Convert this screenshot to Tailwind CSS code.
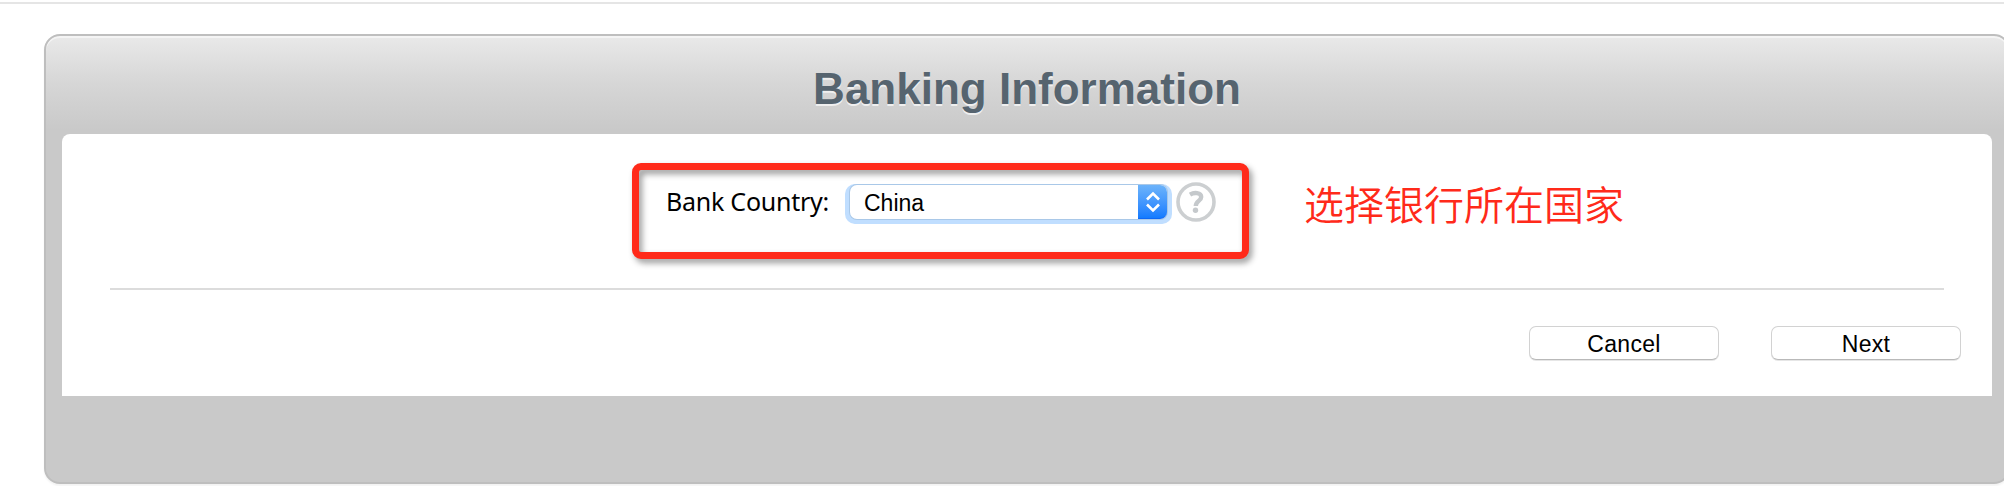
<!DOCTYPE html>
<html lang="en">
<head>
<meta charset="utf-8">
<title>Banking Information</title>
<script src="https://cdn.jsdelivr.net/npm/@tailwindcss/browser@4"></script>
</head>
<body class="h-[486px] w-full overflow-hidden bg-white pt-[2px] font-['Liberation_Sans',sans-serif] text-black">
  <div class="h-[2px] bg-[#e5e5e5]"></div>
  <main class="mt-[30px] ml-[44px] h-[450px] w-[1966px] rounded-[16px] border-2 border-[#bebebe] bg-[#c9c9c9] bg-linear-to-b from-[#e9e9e9] from-0% via-[#d6d6d6] via-[48px] to-[#c9c9c9] to-[94px] px-4 shadow-[inset_0_2px_0_#f4f4f4,0_2px_2px_rgba(0,0,0,0.05)]">
    <h1 class="h-[98px] pt-[28px] text-center text-[44px] leading-[50px] font-bold text-[#56646f] [text-shadow:0_2px_0_#efefef]">Banking Information</h1>
    <section class="flex h-[262px] flex-col rounded-t-[8px] bg-white">
      <div class="relative flex h-[154px] items-start pt-[48px] pl-[604px]">
        <label class="w-[184px] pt-[2px] font-['Noto_Sans',sans-serif] text-[25px] leading-[34px] tracking-[-0.25px] whitespace-nowrap">Bank Country:</label>
        <div class="mt-[3px] flex h-[34px] w-[317px] rounded-[7px] bg-white shadow-[0_0_0_1px_#a9c8e8,0_2px_0_3px_#c0deff,-2px_2px_0_3px_#c0deff,2px_2px_0_3px_#c0deff]">
          <span class="flex-1 pl-[14px] text-[23px] leading-[36px]">China</span>
          <span class="flex w-[29px] items-center justify-center rounded-r-[7px] border-b border-[#0f68f5] bg-linear-to-b from-[#6cb3fa] to-[#127bff]">
            <svg width="16" height="22" viewBox="0 0 16 22" fill="none" stroke="#fff" stroke-width="2.6"><path d="M2 8.5 8 2.5l6 6M2 13.5l6 6 6-6"/></svg>
          </span>
        </div>
        <svg class="ml-[9px]" width="40" height="40" viewBox="0 0 40 40" fill="none"><circle cx="20" cy="20" r="18" stroke="#cccfd1" stroke-width="3.6"/><path d="M14 12.6c4-2.4 11.2-2.2 11.2 2.3 0 4.1-5.4 4-5.4 9" stroke="#c5c9cc" stroke-width="4.4"/><circle cx="19.5" cy="28.2" r="2.7" fill="#c5c9cc"/></svg>
        <p class="ml-[88px] pt-[1px] font-['Noto_Sans_CJK_SC',sans-serif] text-[40px] leading-[40px] font-[350] text-[#ff2a1a]" lang="zh-CN">选择银行所在国家</p>
        <div class="pointer-events-none absolute top-[29px] left-[570px] h-[96px] w-[617px] rounded-[9px] border-[7px] border-[#ff2a1a] drop-shadow-[3px_4px_3px_rgba(0,0,0,0.4)]"></div>
      </div>
      <hr class="mx-[48px] h-[2px] shrink-0 border-0 bg-[#dcdcdc]">
      <div class="mt-[36px] mr-[31px] flex justify-end gap-[52px] pb-px text-[23px] tracking-[0.3px]">
        <button class="h-[34px] w-[190px] rounded-[7px] border border-[#d2d2d2] border-b-[#b9b9b9] bg-white pt-[2px] leading-[30px] shadow-[0_1px_0_#e6e6e6]">Cancel</button>
        <button class="h-[34px] w-[190px] rounded-[7px] border border-[#d2d2d2] border-b-[#b9b9b9] bg-white pt-[2px] leading-[30px] shadow-[0_1px_0_#e6e6e6]">Next</button>
      </div>
    </section>
  </main>
</body>
</html>
